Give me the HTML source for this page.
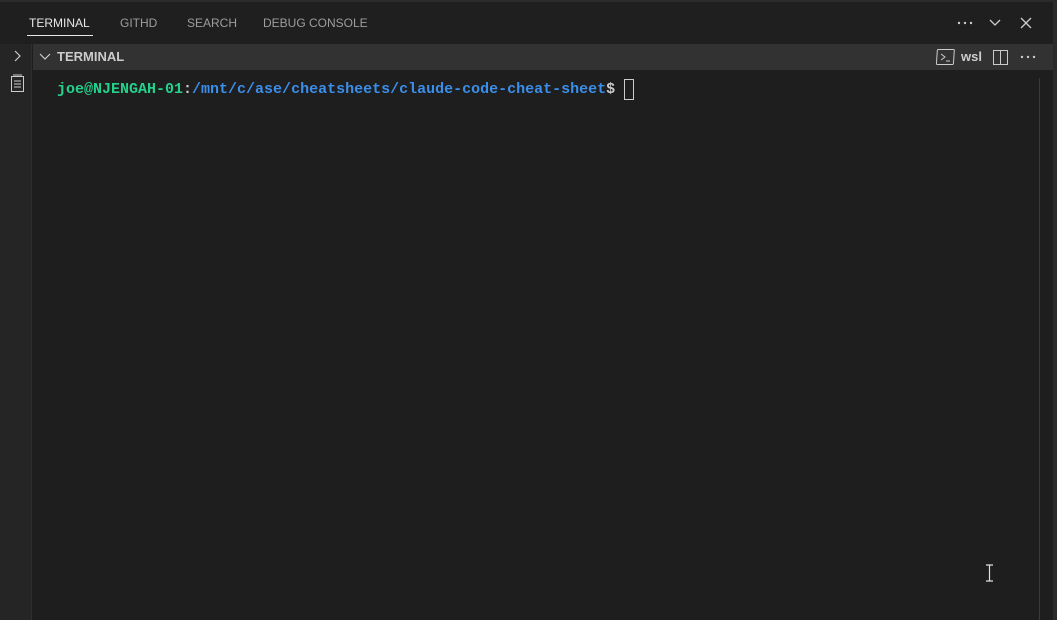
<!DOCTYPE html>
<html><head><meta charset="utf-8"><style>
*{margin:0;padding:0;box-sizing:border-box}
body{width:1057px;height:620px;background:#1e1e1e;position:relative;overflow:hidden;font-family:"Liberation Sans",sans-serif}
.top{position:absolute;left:0;top:0;width:1057px;height:2px;background:#2b2b2b}
.tabs{position:absolute;left:0;top:2px;width:1057px;height:42px;background:#1f1f1f}
.tab{position:absolute;top:14px;font-size:12px;color:#9d9d9d}
.side{position:absolute;left:0;top:44px;width:32px;height:576px;background:#252526;border-right:1px solid #2f2f2f}
.hdr{position:absolute;left:33px;top:44px;width:1024px;height:26px;background:#323232}
.term{position:absolute;left:57px;top:80px;font-family:"Liberation Mono",monospace;font-weight:bold;font-size:15px;line-height:20px;white-space:pre}
</style></head><body>
<div class="top"></div>
<div class="tabs">
<div class="tab" style="left:29px;color:#e7e7e7">TERMINAL</div>
<div style="position:absolute;left:27px;top:33px;width:66px;height:1px;background:#e7e7e7"></div>
<div class="tab" style="left:120px">GITHD</div>
<div class="tab" style="left:187px">SEARCH</div>
<div class="tab" style="left:263px">DEBUG CONSOLE</div>
<svg style="position:absolute;left:955px;top:12px" width="80" height="20">
<circle cx="4" cy="9" r="1.2" fill="#ccc"/><circle cx="10" cy="9" r="1.2" fill="#ccc"/><circle cx="16" cy="9" r="1.2" fill="#ccc"/>
<path d="M35 6l5 5 5-5" stroke="#ccc" stroke-width="1.3" fill="none"/>
<path d="M66 4l10 10M76 4l-10 10" stroke="#ccc" stroke-width="1.3" fill="none"/>
</svg>
</div>
<div class="side">
<svg style="position:absolute;left:10px;top:5px" width="14" height="14"><path d="M5 2l5 5-5 5" stroke="#ccc" stroke-width="1.2" fill="none"/></svg>
<svg style="position:absolute;left:10px;top:29px" width="16" height="20"><rect x="1.5" y="3.5" width="12" height="15" stroke="#ccc" fill="none"/><path d="M3 2h9M4 8h7M4 11h7M4 14h7" stroke="#ccc"/></svg>
</div>
<div class="hdr">
<svg style="position:absolute;left:6px;top:8px" width="14" height="10"><path d="M1 2l5 5 5-5" stroke="#ccc" stroke-width="1.2" fill="none"/></svg>
<div style="position:absolute;left:24px;top:5px;font-size:13px;font-weight:bold;color:#ccc">TERMINAL</div>
<svg style="position:absolute;left:903px;top:4px" width="20" height="18"><rect x="1.5" y="1.5" width="17" height="15" rx="1" stroke="#ccc" fill="none" transform="skewX(-4)"/><path d="M5 6l4 3-4 3M10 13h4" stroke="#ccc" fill="none"/></svg>
<div style="position:absolute;left:928px;top:5px;font-size:13px;font-weight:bold;color:#ccc">wsl</div>
<svg style="position:absolute;left:959px;top:5px" width="16" height="16"><rect x="1.5" y="1.5" width="14" height="14" stroke="#ccc" fill="none"/><path d="M8.5 1.5v14" stroke="#ccc"/></svg>
<svg style="position:absolute;left:986px;top:8px" width="20" height="10"><circle cx="3" cy="5" r="1.2" fill="#ccc"/><circle cx="9" cy="5" r="1.2" fill="#ccc"/><circle cx="15" cy="5" r="1.2" fill="#ccc"/></svg>
</div>
<div class="term"><span style="color:#23d18b">joe@NJENGAH-01</span><span style="color:#ccc">:</span><span style="color:#3b8eea">/mnt/c/ase/cheatsheets/claude-code-cheat-sheet</span><span style="color:#ccc">$</span></div>
<div style="position:absolute;left:624px;top:79px;width:10px;height:21px;border:1px solid #ccc"></div>
<div style="position:absolute;left:1039px;top:78px;width:1px;height:542px;background:#3a3a3a"></div>
<div style="position:absolute;left:1053px;top:0;width:4px;height:620px;background:#2b2b2b"></div>
<svg style="position:absolute;left:985px;top:564px" width="10" height="18"><path d="M1 1h7M1 17h7M4.5 1v16" stroke="#e0e0e0" stroke-width="1.2"/></svg>
</body></html>
